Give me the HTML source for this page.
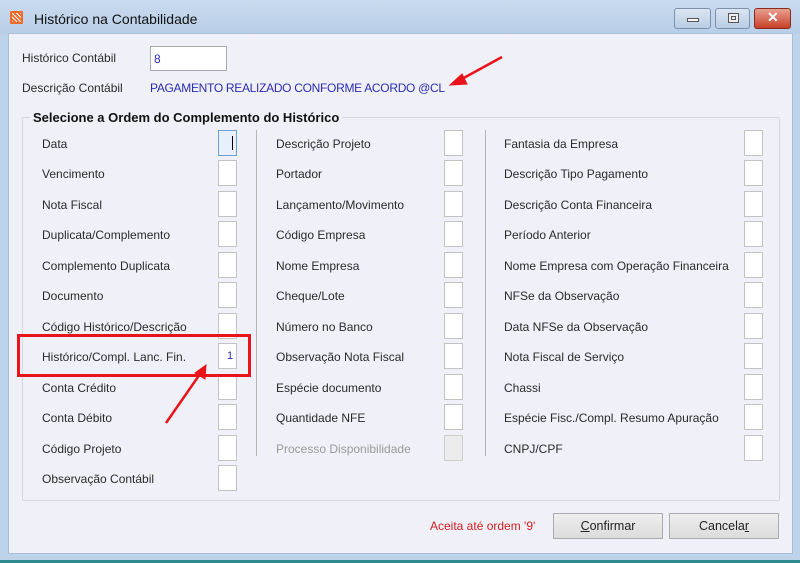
<!DOCTYPE html>
<html><head><meta charset="utf-8"><style>
*{margin:0;padding:0;box-sizing:border-box}
body{width:800px;height:563px;overflow:hidden;background:#bcd3ea;font-family:"Liberation Sans",sans-serif;font-size:12px;color:#222;position:relative}
.a{position:absolute;white-space:nowrap}
.bx{position:absolute;width:19px;height:26px;background:#fff;border:1px solid #c3c3c3}
.lbl{position:absolute;white-space:nowrap;font-size:12px;color:#2a2a2a}
.btn{position:absolute;height:26px;border:1px solid #acacac;background:linear-gradient(#eeeeee,#dcdcdc);text-align:center;line-height:24px;font-size:12.5px;color:#222}
.wb{position:absolute;top:8px;height:21px;border:1px solid #7d91ad;border-radius:3px;background:linear-gradient(#dbe6f3,#b9cde4)}
</style></head><body>
<div class="a" style="left:0;top:0;width:800px;height:34px;background:linear-gradient(#c9dbef,#b8cfe8)"></div>
<div class="a" style="left:10px;top:11px;width:13px;height:13px;background:#f06a2a;border-radius:1px"></div>
<div class="a" style="left:12px;top:13px;width:9px;height:9px;background:repeating-linear-gradient(45deg,#fff 0 1px,#f06a2a 1px 3px)"></div>
<div class="a" style="left:34px;top:11px;font-size:14px;color:#111">Histórico na Contabilidade</div>
<div class="wb" style="left:674px;width:37px"><div class="a" style="left:12px;top:9px;width:12px;height:4px;background:#f5f5f5;border:1px solid #555"></div></div>
<div class="wb" style="left:715px;width:35px"><div class="a" style="left:12px;top:4px;width:11px;height:10px;border:1px solid #555;background:#eee"><div class="a" style="left:2px;top:2px;width:5px;height:4px;border:1px solid #555"></div></div></div>
<div class="wb" style="left:754px;width:37px;border-color:#8a2b1e;background:linear-gradient(#e8a08f,#c8402a)"><div class="a" style="left:12px;top:0px;color:#fff;font-weight:bold;font-size:14px">✕</div></div>
<div class="a" style="left:8px;top:33px;width:785px;height:521px;background:#f0f1f8;border:1px solid #a9bdd5"></div>
<div class="a" style="left:0;top:560px;width:800px;height:3px;background:#2f8a8f"></div>

<div class="lbl" style="left:22px;top:51px">Histórico Contábil</div>
<div class="a" style="left:150px;top:46px;width:77px;height:25px;background:#fff;border:1px solid #aaa"></div>
<div class="a" style="left:154px;top:52px;color:#2c2cb0">8</div>
<div class="lbl" style="left:22px;top:81px">Descrição Contábil</div>
<div class="a" style="left:150px;top:81px;color:#2c2cb0;letter-spacing:-0.3px">PAGAMENTO REALIZADO CONFORME ACORDO @CL</div>

<div class="a" style="left:22px;top:117px;width:758px;height:384px;border:1px solid #d6d6dc;border-radius:2px"></div>
<div class="a" style="left:30px;top:110px;background:#f0f1f8;padding:0 3px;font-weight:bold;font-size:13px;color:#111">Selecione a Ordem do Complemento do Histórico</div>
<div class="a" style="left:256px;top:130px;width:1px;height:326px;background:#b5b5b5"></div>
<div class="a" style="left:485px;top:130px;width:1px;height:326px;background:#b5b5b5"></div>

<div class="lbl" style="left:42px;top:137px">Data</div>
<div class="lbl" style="left:42px;top:167px">Vencimento</div>
<div class="lbl" style="left:42px;top:198px">Nota Fiscal</div>
<div class="lbl" style="left:42px;top:228px">Duplicata/Complemento</div>
<div class="lbl" style="left:42px;top:259px">Complemento Duplicata</div>
<div class="lbl" style="left:42px;top:289px">Documento</div>
<div class="lbl" style="left:42px;top:320px">Código Histórico/Descrição</div>
<div class="lbl" style="left:42px;top:350px">Histórico/Compl. Lanc. Fin.</div>
<div class="lbl" style="left:42px;top:381px">Conta Crédito</div>
<div class="lbl" style="left:42px;top:411px">Conta Débito</div>
<div class="lbl" style="left:42px;top:442px">Código Projeto</div>
<div class="lbl" style="left:42px;top:472px">Observação Contábil</div>
<div class="bx" style="left:218px;top:130px;border-color:#6aa0d8;background:#e8f1fb"><div class="a" style="left:13px;top:5px;width:1px;height:14px;background:#000"></div></div>
<div class="bx" style="left:218px;top:160px"></div>
<div class="bx" style="left:218px;top:191px"></div>
<div class="bx" style="left:218px;top:221px"></div>
<div class="bx" style="left:218px;top:252px"></div>
<div class="bx" style="left:218px;top:282px"></div>
<div class="bx" style="left:218px;top:313px"></div>
<div class="bx" style="left:218px;top:343px"><div class="a" style="left:8px;top:6px;color:#2c2cb0;font-size:11px">1</div></div>
<div class="bx" style="left:218px;top:374px"></div>
<div class="bx" style="left:218px;top:404px"></div>
<div class="bx" style="left:218px;top:435px"></div>
<div class="bx" style="left:218px;top:465px"></div>

<div class="lbl" style="left:276px;top:137px">Descrição Projeto</div>
<div class="lbl" style="left:276px;top:167px">Portador</div>
<div class="lbl" style="left:276px;top:198px">Lançamento/Movimento</div>
<div class="lbl" style="left:276px;top:228px">Código Empresa</div>
<div class="lbl" style="left:276px;top:259px">Nome Empresa</div>
<div class="lbl" style="left:276px;top:289px">Cheque/Lote</div>
<div class="lbl" style="left:276px;top:320px">Número no Banco</div>
<div class="lbl" style="left:276px;top:350px">Observação Nota Fiscal</div>
<div class="lbl" style="left:276px;top:381px">Espécie documento</div>
<div class="lbl" style="left:276px;top:411px">Quantidade NFE</div>
<div class="lbl" style="left:276px;top:442px;color:#9a9a9a">Processo Disponibilidade</div>
<div class="bx" style="left:444px;top:130px"></div>
<div class="bx" style="left:444px;top:160px"></div>
<div class="bx" style="left:444px;top:191px"></div>
<div class="bx" style="left:444px;top:221px"></div>
<div class="bx" style="left:444px;top:252px"></div>
<div class="bx" style="left:444px;top:282px"></div>
<div class="bx" style="left:444px;top:313px"></div>
<div class="bx" style="left:444px;top:343px"></div>
<div class="bx" style="left:444px;top:374px"></div>
<div class="bx" style="left:444px;top:404px"></div>
<div class="bx" style="left:444px;top:435px;background:#ececec;border-color:#cfcfcf"></div>

<div class="lbl" style="left:504px;top:137px">Fantasia da Empresa</div>
<div class="lbl" style="left:504px;top:167px">Descrição Tipo Pagamento</div>
<div class="lbl" style="left:504px;top:198px">Descrição Conta Financeira</div>
<div class="lbl" style="left:504px;top:228px">Período Anterior</div>
<div class="lbl" style="left:504px;top:259px">Nome Empresa com Operação Financeira</div>
<div class="lbl" style="left:504px;top:289px">NFSe da Observação</div>
<div class="lbl" style="left:504px;top:320px">Data NFSe da Observação</div>
<div class="lbl" style="left:504px;top:350px">Nota Fiscal de Serviço</div>
<div class="lbl" style="left:504px;top:381px">Chassi</div>
<div class="lbl" style="left:504px;top:411px">Espécie Fisc./Compl. Resumo Apuração</div>
<div class="lbl" style="left:504px;top:442px">CNPJ/CPF</div>
<div class="bx" style="left:744px;top:130px"></div>
<div class="bx" style="left:744px;top:160px"></div>
<div class="bx" style="left:744px;top:191px"></div>
<div class="bx" style="left:744px;top:221px"></div>
<div class="bx" style="left:744px;top:252px"></div>
<div class="bx" style="left:744px;top:282px"></div>
<div class="bx" style="left:744px;top:313px"></div>
<div class="bx" style="left:744px;top:343px"></div>
<div class="bx" style="left:744px;top:374px"></div>
<div class="bx" style="left:744px;top:404px"></div>
<div class="bx" style="left:744px;top:435px"></div>

<div class="a" style="left:430px;top:519px;color:#d02020">Aceita até ordem '9'</div>
<div class="btn" style="left:553px;top:513px;width:110px"><u>C</u>onfirmar</div>
<div class="btn" style="left:669px;top:513px;width:110px">Cancela<u>r</u></div>

<div class="a" style="left:17px;top:334px;width:234px;height:43px;border:3px solid #e8141a"></div>
<svg class="a" style="left:0;top:0" width="800" height="563">
<g stroke="#e8141a" stroke-width="2.5" fill="#e8141a">
<line x1="502" y1="57" x2="460" y2="80"/>
<polygon points="450,85 462,74 467,84" stroke-width="1"/>
<line x1="166" y1="423" x2="200" y2="374"/>
<polygon points="206,365 205,379 195,373" stroke-width="1"/>
</g></svg>
</body></html>
